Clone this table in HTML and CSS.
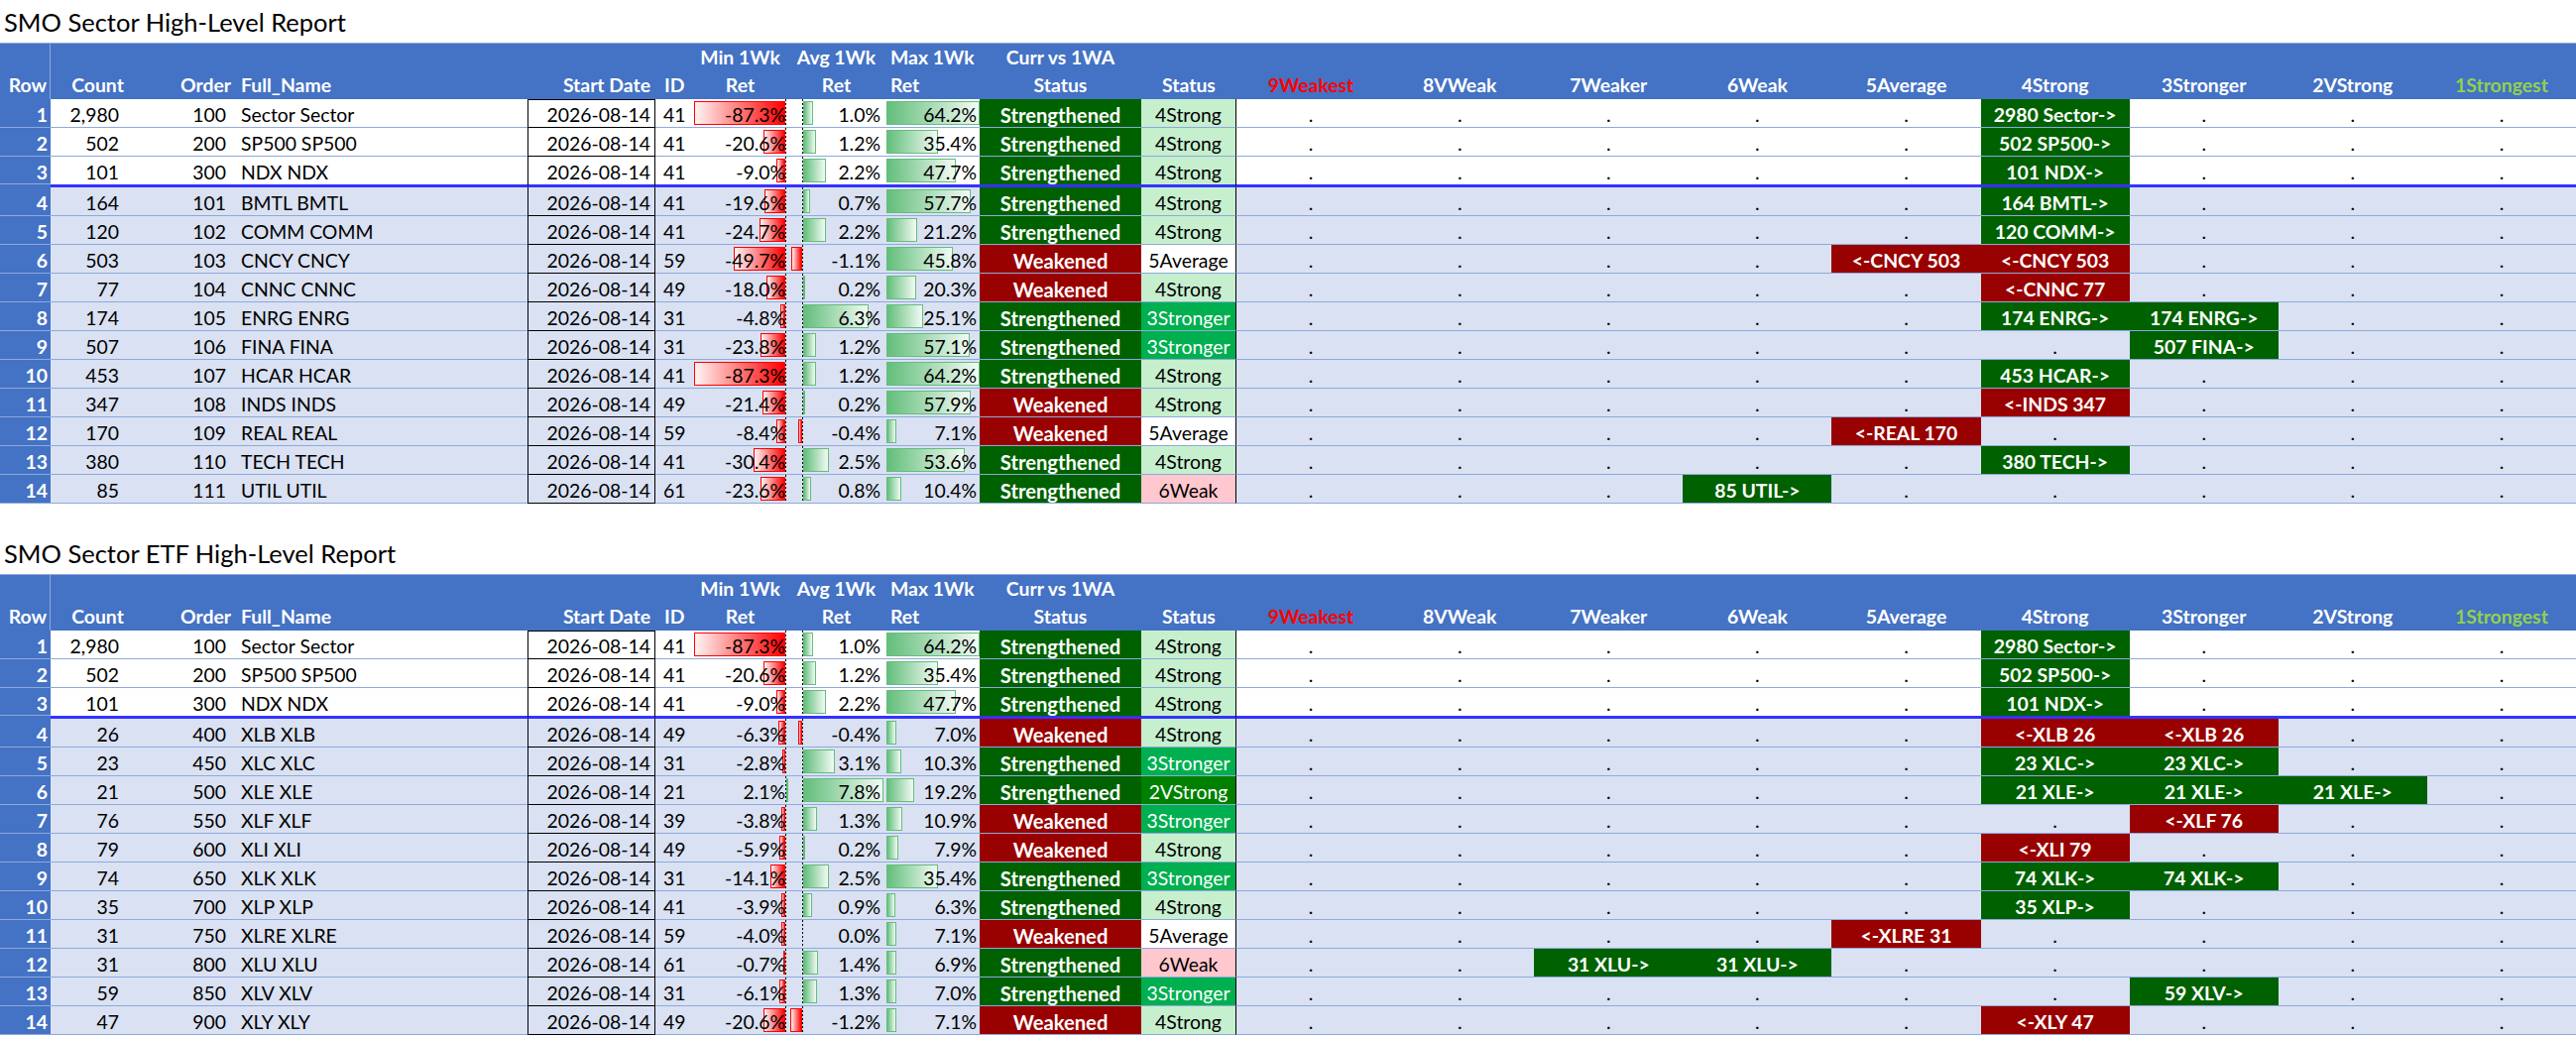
FILE: index.html
```html
<!DOCTYPE html>
<html>
<head>
<meta charset="utf-8">
<title>SMO Sector High-Level Report</title>
<link rel="stylesheet" href="styles.css">
</head>
<body>
<div class="sheet">
<section class="sec">
<div class="ttl">SMO Sector High-Level Report</div>
<div class="grid hd">
<div class="h hrn">Row</div><div class="h hc">Count</div><div class="h hr hord">Order</div><div class="h hl hnm">Full_Name</div><div class="h hr hdt">Start Date</div><div class="h hl hid">ID</div>
<div class="h hc">Min 1Wk<br>Ret</div><div class="h hc">Avg 1Wk<br>Ret</div><div class="h hl hmx">Max 1Wk<br>Ret</div><div class="h hc">Curr vs 1WA<br>Status</div><div class="h hc">Status</div>
<div class="h hc red">9Weakest</div><div class="h hc">8VWeak</div><div class="h hc">7Weaker</div><div class="h hc">6Weak</div><div class="h hc">5Average</div><div class="h hc">4Strong</div><div class="h hc">3Stronger</div><div class="h hc">2VStrong</div><div class="h hc lgr">1Strongest</div>
</div>

<div class="grid r w r1">
<div class="c rn">1</div><div class="c cnt">2,980</div><div class="c ord">100</div><div class="c nm">Sector Sector</div><div class="c dt">2026-08-14</div><div class="c id">41</div>
<div class="c mn"><b class="bn"><i class="rd" style="width:92px"></i></b><b class="ax"></b><b class="bp"></b><span class="v">-87.3%</span></div>
<div class="c av"><b class="bn"></b><b class="ax"></b><b class="bp"><i class="gr" style="width:10.4px"></i></b><span class="v">1.0%</span></div>
<div class="c mx"><b class="bp"><i class="gr" style="width:94px"></i></b><span class="v">64.2%</span></div>
<div class="c cs sg">Strengthened</div><div class="c st s4">4Strong</div>
<div class="c d">.</div><div class="c d">.</div><div class="c d">.</div><div class="c d">.</div><div class="c d">.</div><div class="c d gk">2980 Sector-&gt;</div><div class="c d">.</div><div class="c d">.</div><div class="c d">.</div>
</div>

<div class="grid r w">
<div class="c rn">2</div><div class="c cnt">502</div><div class="c ord">200</div><div class="c nm">SP500 SP500</div><div class="c dt">2026-08-14</div><div class="c id">41</div>
<div class="c mn"><b class="bn"><i class="rd" style="width:21.7px"></i></b><b class="ax"></b><b class="bp"></b><span class="v">-20.6%</span></div>
<div class="c av"><b class="bn"></b><b class="ax"></b><b class="bp"><i class="gr" style="width:12.5px"></i></b><span class="v">1.2%</span></div>
<div class="c mx"><b class="bp"><i class="gr" style="width:51.8px"></i></b><span class="v">35.4%</span></div>
<div class="c cs sg">Strengthened</div><div class="c st s4">4Strong</div>
<div class="c d">.</div><div class="c d">.</div><div class="c d">.</div><div class="c d">.</div><div class="c d">.</div><div class="c d gk">502 SP500-&gt;</div><div class="c d">.</div><div class="c d">.</div><div class="c d">.</div>
</div>

<div class="grid r w sep">
<div class="c rn">3</div><div class="c cnt">101</div><div class="c ord">300</div><div class="c nm">NDX NDX</div><div class="c dt">2026-08-14</div><div class="c id">41</div>
<div class="c mn"><b class="bn"><i class="rd" style="width:9.5px"></i></b><b class="ax"></b><b class="bp"></b><span class="v">-9.0%</span></div>
<div class="c av"><b class="bn"></b><b class="ax"></b><b class="bp"><i class="gr" style="width:22.9px"></i></b><span class="v">2.2%</span></div>
<div class="c mx"><b class="bp"><i class="gr" style="width:69.8px"></i></b><span class="v">47.7%</span></div>
<div class="c cs sg">Strengthened</div><div class="c st s4">4Strong</div>
<div class="c d">.</div><div class="c d">.</div><div class="c d">.</div><div class="c d">.</div><div class="c d">.</div><div class="c d gk">101 NDX-&gt;</div><div class="c d">.</div><div class="c d">.</div><div class="c d">.</div>
</div>

<div class="grid r b">
<div class="c rn">4</div><div class="c cnt">164</div><div class="c ord">101</div><div class="c nm">BMTL BMTL</div><div class="c dt">2026-08-14</div><div class="c id">41</div>
<div class="c mn"><b class="bn"><i class="rd" style="width:20.7px"></i></b><b class="ax"></b><b class="bp"></b><span class="v">-19.6%</span></div>
<div class="c av"><b class="bn"></b><b class="ax"></b><b class="bp"><i class="gr" style="width:7.3px"></i></b><span class="v">0.7%</span></div>
<div class="c mx"><b class="bp"><i class="gr" style="width:84.5px"></i></b><span class="v">57.7%</span></div>
<div class="c cs sg">Strengthened</div><div class="c st s4">4Strong</div>
<div class="c d">.</div><div class="c d">.</div><div class="c d">.</div><div class="c d">.</div><div class="c d">.</div><div class="c d gk">164 BMTL-&gt;</div><div class="c d">.</div><div class="c d">.</div><div class="c d">.</div>
</div>

<div class="grid r b">
<div class="c rn">5</div><div class="c cnt">120</div><div class="c ord">102</div><div class="c nm">COMM COMM</div><div class="c dt">2026-08-14</div><div class="c id">41</div>
<div class="c mn"><b class="bn"><i class="rd" style="width:26px"></i></b><b class="ax"></b><b class="bp"></b><span class="v">-24.7%</span></div>
<div class="c av"><b class="bn"></b><b class="ax"></b><b class="bp"><i class="gr" style="width:22.9px"></i></b><span class="v">2.2%</span></div>
<div class="c mx"><b class="bp"><i class="gr" style="width:31px"></i></b><span class="v">21.2%</span></div>
<div class="c cs sg">Strengthened</div><div class="c st s4">4Strong</div>
<div class="c d">.</div><div class="c d">.</div><div class="c d">.</div><div class="c d">.</div><div class="c d">.</div><div class="c d gk">120 COMM-&gt;</div><div class="c d">.</div><div class="c d">.</div><div class="c d">.</div>
</div>

<div class="grid r b">
<div class="c rn">6</div><div class="c cnt">503</div><div class="c ord">103</div><div class="c nm">CNCY CNCY</div><div class="c dt">2026-08-14</div><div class="c id">59</div>
<div class="c mn"><b class="bn"><i class="rd" style="width:52.4px"></i></b><b class="ax"></b><b class="bp"></b><span class="v">-49.7%</span></div>
<div class="c av"><b class="bn"><i class="rd" style="width:11px"></i></b><b class="ax"></b><b class="bp"></b><span class="v">-1.1%</span></div>
<div class="c mx"><b class="bp"><i class="gr" style="width:67px"></i></b><span class="v">45.8%</span></div>
<div class="c cs wk">Weakened</div><div class="c st s5">5Average</div>
<div class="c d">.</div><div class="c d">.</div><div class="c d">.</div><div class="c d">.</div><div class="c d rk">&lt;-CNCY 503</div><div class="c d rk">&lt;-CNCY 503</div><div class="c d">.</div><div class="c d">.</div><div class="c d">.</div>
</div>

<div class="grid r b">
<div class="c rn">7</div><div class="c cnt">77</div><div class="c ord">104</div><div class="c nm">CNNC CNNC</div><div class="c dt">2026-08-14</div><div class="c id">49</div>
<div class="c mn"><b class="bn"><i class="rd" style="width:19px"></i></b><b class="ax"></b><b class="bp"></b><span class="v">-18.0%</span></div>
<div class="c av"><b class="bn"></b><b class="ax"></b><b class="bp"><i class="gr" style="width:2.1px"></i></b><span class="v">0.2%</span></div>
<div class="c mx"><b class="bp"><i class="gr" style="width:29.7px"></i></b><span class="v">20.3%</span></div>
<div class="c cs wk">Weakened</div><div class="c st s4">4Strong</div>
<div class="c d">.</div><div class="c d">.</div><div class="c d">.</div><div class="c d">.</div><div class="c d">.</div><div class="c d rk">&lt;-CNNC 77</div><div class="c d">.</div><div class="c d">.</div><div class="c d">.</div>
</div>

<div class="grid r b">
<div class="c rn">8</div><div class="c cnt">174</div><div class="c ord">105</div><div class="c nm">ENRG ENRG</div><div class="c dt">2026-08-14</div><div class="c id">31</div>
<div class="c mn"><b class="bn"><i class="rd" style="width:5.1px"></i></b><b class="ax"></b><b class="bp"></b><span class="v">-4.8%</span></div>
<div class="c av"><b class="bn"></b><b class="ax"></b><b class="bp"><i class="gr" style="width:65.5px"></i></b><span class="v">6.3%</span></div>
<div class="c mx"><b class="bp"><i class="gr" style="width:36.7px"></i></b><span class="v">25.1%</span></div>
<div class="c cs sg">Strengthened</div><div class="c st s3">3Stronger</div>
<div class="c d">.</div><div class="c d">.</div><div class="c d">.</div><div class="c d">.</div><div class="c d">.</div><div class="c d gk">174 ENRG-&gt;</div><div class="c d gk">174 ENRG-&gt;</div><div class="c d">.</div><div class="c d">.</div>
</div>

<div class="grid r b">
<div class="c rn">9</div><div class="c cnt">507</div><div class="c ord">106</div><div class="c nm">FINA FINA</div><div class="c dt">2026-08-14</div><div class="c id">31</div>
<div class="c mn"><b class="bn"><i class="rd" style="width:25.1px"></i></b><b class="ax"></b><b class="bp"></b><span class="v">-23.8%</span></div>
<div class="c av"><b class="bn"></b><b class="ax"></b><b class="bp"><i class="gr" style="width:12.5px"></i></b><span class="v">1.2%</span></div>
<div class="c mx"><b class="bp"><i class="gr" style="width:83.6px"></i></b><span class="v">57.1%</span></div>
<div class="c cs sg">Strengthened</div><div class="c st s3">3Stronger</div>
<div class="c d">.</div><div class="c d">.</div><div class="c d">.</div><div class="c d">.</div><div class="c d">.</div><div class="c d">.</div><div class="c d gk">507 FINA-&gt;</div><div class="c d">.</div><div class="c d">.</div>
</div>

<div class="grid r b">
<div class="c rn">10</div><div class="c cnt">453</div><div class="c ord">107</div><div class="c nm">HCAR HCAR</div><div class="c dt">2026-08-14</div><div class="c id">41</div>
<div class="c mn"><b class="bn"><i class="rd" style="width:92px"></i></b><b class="ax"></b><b class="bp"></b><span class="v">-87.3%</span></div>
<div class="c av"><b class="bn"></b><b class="ax"></b><b class="bp"><i class="gr" style="width:12.5px"></i></b><span class="v">1.2%</span></div>
<div class="c mx"><b class="bp"><i class="gr" style="width:94px"></i></b><span class="v">64.2%</span></div>
<div class="c cs sg">Strengthened</div><div class="c st s4">4Strong</div>
<div class="c d">.</div><div class="c d">.</div><div class="c d">.</div><div class="c d">.</div><div class="c d">.</div><div class="c d gk">453 HCAR-&gt;</div><div class="c d">.</div><div class="c d">.</div><div class="c d">.</div>
</div>

<div class="grid r b">
<div class="c rn">11</div><div class="c cnt">347</div><div class="c ord">108</div><div class="c nm">INDS INDS</div><div class="c dt">2026-08-14</div><div class="c id">49</div>
<div class="c mn"><b class="bn"><i class="rd" style="width:22.6px"></i></b><b class="ax"></b><b class="bp"></b><span class="v">-21.4%</span></div>
<div class="c av"><b class="bn"></b><b class="ax"></b><b class="bp"><i class="gr" style="width:2.1px"></i></b><span class="v">0.2%</span></div>
<div class="c mx"><b class="bp"><i class="gr" style="width:84.8px"></i></b><span class="v">57.9%</span></div>
<div class="c cs wk">Weakened</div><div class="c st s4">4Strong</div>
<div class="c d">.</div><div class="c d">.</div><div class="c d">.</div><div class="c d">.</div><div class="c d">.</div><div class="c d rk">&lt;-INDS 347</div><div class="c d">.</div><div class="c d">.</div><div class="c d">.</div>
</div>

<div class="grid r b">
<div class="c rn">12</div><div class="c cnt">170</div><div class="c ord">109</div><div class="c nm">REAL REAL</div><div class="c dt">2026-08-14</div><div class="c id">59</div>
<div class="c mn"><b class="bn"><i class="rd" style="width:8.9px"></i></b><b class="ax"></b><b class="bp"></b><span class="v">-8.4%</span></div>
<div class="c av"><b class="bn"><i class="rd" style="width:4px"></i></b><b class="ax"></b><b class="bp"></b><span class="v">-0.4%</span></div>
<div class="c mx"><b class="bp"><i class="gr" style="width:10.4px"></i></b><span class="v">7.1%</span></div>
<div class="c cs wk">Weakened</div><div class="c st s5">5Average</div>
<div class="c d">.</div><div class="c d">.</div><div class="c d">.</div><div class="c d">.</div><div class="c d rk">&lt;-REAL 170</div><div class="c d">.</div><div class="c d">.</div><div class="c d">.</div><div class="c d">.</div>
</div>

<div class="grid r b">
<div class="c rn">13</div><div class="c cnt">380</div><div class="c ord">110</div><div class="c nm">TECH TECH</div><div class="c dt">2026-08-14</div><div class="c id">41</div>
<div class="c mn"><b class="bn"><i class="rd" style="width:32px"></i></b><b class="ax"></b><b class="bp"></b><span class="v">-30.4%</span></div>
<div class="c av"><b class="bn"></b><b class="ax"></b><b class="bp"><i class="gr" style="width:26px"></i></b><span class="v">2.5%</span></div>
<div class="c mx"><b class="bp"><i class="gr" style="width:78.5px"></i></b><span class="v">53.6%</span></div>
<div class="c cs sg">Strengthened</div><div class="c st s4">4Strong</div>
<div class="c d">.</div><div class="c d">.</div><div class="c d">.</div><div class="c d">.</div><div class="c d">.</div><div class="c d gk">380 TECH-&gt;</div><div class="c d">.</div><div class="c d">.</div><div class="c d">.</div>
</div>

<div class="grid r b">
<div class="c rn">14</div><div class="c cnt">85</div><div class="c ord">111</div><div class="c nm">UTIL UTIL</div><div class="c dt">2026-08-14</div><div class="c id">61</div>
<div class="c mn"><b class="bn"><i class="rd" style="width:24.9px"></i></b><b class="ax"></b><b class="bp"></b><span class="v">-23.6%</span></div>
<div class="c av"><b class="bn"></b><b class="ax"></b><b class="bp"><i class="gr" style="width:8.3px"></i></b><span class="v">0.8%</span></div>
<div class="c mx"><b class="bp"><i class="gr" style="width:15.2px"></i></b><span class="v">10.4%</span></div>
<div class="c cs sg">Strengthened</div><div class="c st s6">6Weak</div>
<div class="c d">.</div><div class="c d">.</div><div class="c d">.</div><div class="c d gk">85 UTIL-&gt;</div><div class="c d">.</div><div class="c d">.</div><div class="c d">.</div><div class="c d">.</div><div class="c d">.</div>
</div>
</section>

<section class="sec sec2">
<div class="ttl">SMO Sector ETF High-Level Report</div>
<div class="grid hd">
<div class="h hrn">Row</div><div class="h hc">Count</div><div class="h hr hord">Order</div><div class="h hl hnm">Full_Name</div><div class="h hr hdt">Start Date</div><div class="h hl hid">ID</div>
<div class="h hc">Min 1Wk<br>Ret</div><div class="h hc">Avg 1Wk<br>Ret</div><div class="h hl hmx">Max 1Wk<br>Ret</div><div class="h hc">Curr vs 1WA<br>Status</div><div class="h hc">Status</div>
<div class="h hc red">9Weakest</div><div class="h hc">8VWeak</div><div class="h hc">7Weaker</div><div class="h hc">6Weak</div><div class="h hc">5Average</div><div class="h hc">4Strong</div><div class="h hc">3Stronger</div><div class="h hc">2VStrong</div><div class="h hc lgr">1Strongest</div>
</div>

<div class="grid r w r1">
<div class="c rn">1</div><div class="c cnt">2,980</div><div class="c ord">100</div><div class="c nm">Sector Sector</div><div class="c dt">2026-08-14</div><div class="c id">41</div>
<div class="c mn"><b class="bn"><i class="rd" style="width:92px"></i></b><b class="ax"></b><b class="bp"></b><span class="v">-87.3%</span></div>
<div class="c av"><b class="bn"></b><b class="ax"></b><b class="bp"><i class="gr" style="width:10.4px"></i></b><span class="v">1.0%</span></div>
<div class="c mx"><b class="bp"><i class="gr" style="width:94px"></i></b><span class="v">64.2%</span></div>
<div class="c cs sg">Strengthened</div><div class="c st s4">4Strong</div>
<div class="c d">.</div><div class="c d">.</div><div class="c d">.</div><div class="c d">.</div><div class="c d">.</div><div class="c d gk">2980 Sector-&gt;</div><div class="c d">.</div><div class="c d">.</div><div class="c d">.</div>
</div>

<div class="grid r w">
<div class="c rn">2</div><div class="c cnt">502</div><div class="c ord">200</div><div class="c nm">SP500 SP500</div><div class="c dt">2026-08-14</div><div class="c id">41</div>
<div class="c mn"><b class="bn"><i class="rd" style="width:21.7px"></i></b><b class="ax"></b><b class="bp"></b><span class="v">-20.6%</span></div>
<div class="c av"><b class="bn"></b><b class="ax"></b><b class="bp"><i class="gr" style="width:12.5px"></i></b><span class="v">1.2%</span></div>
<div class="c mx"><b class="bp"><i class="gr" style="width:51.8px"></i></b><span class="v">35.4%</span></div>
<div class="c cs sg">Strengthened</div><div class="c st s4">4Strong</div>
<div class="c d">.</div><div class="c d">.</div><div class="c d">.</div><div class="c d">.</div><div class="c d">.</div><div class="c d gk">502 SP500-&gt;</div><div class="c d">.</div><div class="c d">.</div><div class="c d">.</div>
</div>

<div class="grid r w sep">
<div class="c rn">3</div><div class="c cnt">101</div><div class="c ord">300</div><div class="c nm">NDX NDX</div><div class="c dt">2026-08-14</div><div class="c id">41</div>
<div class="c mn"><b class="bn"><i class="rd" style="width:9.5px"></i></b><b class="ax"></b><b class="bp"></b><span class="v">-9.0%</span></div>
<div class="c av"><b class="bn"></b><b class="ax"></b><b class="bp"><i class="gr" style="width:22.9px"></i></b><span class="v">2.2%</span></div>
<div class="c mx"><b class="bp"><i class="gr" style="width:69.8px"></i></b><span class="v">47.7%</span></div>
<div class="c cs sg">Strengthened</div><div class="c st s4">4Strong</div>
<div class="c d">.</div><div class="c d">.</div><div class="c d">.</div><div class="c d">.</div><div class="c d">.</div><div class="c d gk">101 NDX-&gt;</div><div class="c d">.</div><div class="c d">.</div><div class="c d">.</div>
</div>

<div class="grid r b">
<div class="c rn">4</div><div class="c cnt">26</div><div class="c ord">400</div><div class="c nm">XLB XLB</div><div class="c dt">2026-08-14</div><div class="c id">49</div>
<div class="c mn"><b class="bn"><i class="rd" style="width:6.6px"></i></b><b class="ax"></b><b class="bp"></b><span class="v">-6.3%</span></div>
<div class="c av"><b class="bn"><i class="rd" style="width:4px"></i></b><b class="ax"></b><b class="bp"></b><span class="v">-0.4%</span></div>
<div class="c mx"><b class="bp"><i class="gr" style="width:10.2px"></i></b><span class="v">7.0%</span></div>
<div class="c cs wk">Weakened</div><div class="c st s4">4Strong</div>
<div class="c d">.</div><div class="c d">.</div><div class="c d">.</div><div class="c d">.</div><div class="c d">.</div><div class="c d rk">&lt;-XLB 26</div><div class="c d rk">&lt;-XLB 26</div><div class="c d">.</div><div class="c d">.</div>
</div>

<div class="grid r b">
<div class="c rn">5</div><div class="c cnt">23</div><div class="c ord">450</div><div class="c nm">XLC XLC</div><div class="c dt">2026-08-14</div><div class="c id">31</div>
<div class="c mn"><b class="bn"><i class="rd" style="width:3px"></i></b><b class="ax"></b><b class="bp"></b><span class="v">-2.8%</span></div>
<div class="c av"><b class="bn"></b><b class="ax"></b><b class="bp"><i class="gr" style="width:32.2px"></i></b><span class="v">3.1%</span></div>
<div class="c mx"><b class="bp"><i class="gr" style="width:15.1px"></i></b><span class="v">10.3%</span></div>
<div class="c cs sg">Strengthened</div><div class="c st s3">3Stronger</div>
<div class="c d">.</div><div class="c d">.</div><div class="c d">.</div><div class="c d">.</div><div class="c d">.</div><div class="c d gk">23 XLC-&gt;</div><div class="c d gk">23 XLC-&gt;</div><div class="c d">.</div><div class="c d">.</div>
</div>

<div class="grid r b">
<div class="c rn">6</div><div class="c cnt">21</div><div class="c ord">500</div><div class="c nm">XLE XLE</div><div class="c dt">2026-08-14</div><div class="c id">21</div>
<div class="c mn"><b class="bn"></b><b class="ax"></b><b class="bp"><i class="gr" style="width:2px"></i></b><span class="v">2.1%</span></div>
<div class="c av"><b class="bn"></b><b class="ax"></b><b class="bp"><i class="gr" style="width:81px"></i></b><span class="v">7.8%</span></div>
<div class="c mx"><b class="bp"><i class="gr" style="width:28.1px"></i></b><span class="v">19.2%</span></div>
<div class="c cs sg">Strengthened</div><div class="c st s2">2VStrong</div>
<div class="c d">.</div><div class="c d">.</div><div class="c d">.</div><div class="c d">.</div><div class="c d">.</div><div class="c d gk">21 XLE-&gt;</div><div class="c d gk">21 XLE-&gt;</div><div class="c d gk">21 XLE-&gt;</div><div class="c d">.</div>
</div>

<div class="grid r b">
<div class="c rn">7</div><div class="c cnt">76</div><div class="c ord">550</div><div class="c nm">XLF XLF</div><div class="c dt">2026-08-14</div><div class="c id">39</div>
<div class="c mn"><b class="bn"><i class="rd" style="width:4px"></i></b><b class="ax"></b><b class="bp"></b><span class="v">-3.8%</span></div>
<div class="c av"><b class="bn"></b><b class="ax"></b><b class="bp"><i class="gr" style="width:13.5px"></i></b><span class="v">1.3%</span></div>
<div class="c mx"><b class="bp"><i class="gr" style="width:16px"></i></b><span class="v">10.9%</span></div>
<div class="c cs wk">Weakened</div><div class="c st s3">3Stronger</div>
<div class="c d">.</div><div class="c d">.</div><div class="c d">.</div><div class="c d">.</div><div class="c d">.</div><div class="c d">.</div><div class="c d rk">&lt;-XLF 76</div><div class="c d">.</div><div class="c d">.</div>
</div>

<div class="grid r b">
<div class="c rn">8</div><div class="c cnt">79</div><div class="c ord">600</div><div class="c nm">XLI XLI</div><div class="c dt">2026-08-14</div><div class="c id">49</div>
<div class="c mn"><b class="bn"><i class="rd" style="width:6.2px"></i></b><b class="ax"></b><b class="bp"></b><span class="v">-5.9%</span></div>
<div class="c av"><b class="bn"></b><b class="ax"></b><b class="bp"><i class="gr" style="width:2.1px"></i></b><span class="v">0.2%</span></div>
<div class="c mx"><b class="bp"><i class="gr" style="width:11.6px"></i></b><span class="v">7.9%</span></div>
<div class="c cs wk">Weakened</div><div class="c st s4">4Strong</div>
<div class="c d">.</div><div class="c d">.</div><div class="c d">.</div><div class="c d">.</div><div class="c d">.</div><div class="c d rk">&lt;-XLI 79</div><div class="c d">.</div><div class="c d">.</div><div class="c d">.</div>
</div>

<div class="grid r b">
<div class="c rn">9</div><div class="c cnt">74</div><div class="c ord">650</div><div class="c nm">XLK XLK</div><div class="c dt">2026-08-14</div><div class="c id">31</div>
<div class="c mn"><b class="bn"><i class="rd" style="width:14.9px"></i></b><b class="ax"></b><b class="bp"></b><span class="v">-14.1%</span></div>
<div class="c av"><b class="bn"></b><b class="ax"></b><b class="bp"><i class="gr" style="width:26px"></i></b><span class="v">2.5%</span></div>
<div class="c mx"><b class="bp"><i class="gr" style="width:51.8px"></i></b><span class="v">35.4%</span></div>
<div class="c cs sg">Strengthened</div><div class="c st s3">3Stronger</div>
<div class="c d">.</div><div class="c d">.</div><div class="c d">.</div><div class="c d">.</div><div class="c d">.</div><div class="c d gk">74 XLK-&gt;</div><div class="c d gk">74 XLK-&gt;</div><div class="c d">.</div><div class="c d">.</div>
</div>

<div class="grid r b">
<div class="c rn">10</div><div class="c cnt">35</div><div class="c ord">700</div><div class="c nm">XLP XLP</div><div class="c dt">2026-08-14</div><div class="c id">41</div>
<div class="c mn"><b class="bn"><i class="rd" style="width:4.1px"></i></b><b class="ax"></b><b class="bp"></b><span class="v">-3.9%</span></div>
<div class="c av"><b class="bn"></b><b class="ax"></b><b class="bp"><i class="gr" style="width:9.4px"></i></b><span class="v">0.9%</span></div>
<div class="c mx"><b class="bp"><i class="gr" style="width:9.2px"></i></b><span class="v">6.3%</span></div>
<div class="c cs sg">Strengthened</div><div class="c st s4">4Strong</div>
<div class="c d">.</div><div class="c d">.</div><div class="c d">.</div><div class="c d">.</div><div class="c d">.</div><div class="c d gk">35 XLP-&gt;</div><div class="c d">.</div><div class="c d">.</div><div class="c d">.</div>
</div>

<div class="grid r b">
<div class="c rn">11</div><div class="c cnt">31</div><div class="c ord">750</div><div class="c nm">XLRE XLRE</div><div class="c dt">2026-08-14</div><div class="c id">59</div>
<div class="c mn"><b class="bn"><i class="rd" style="width:4.2px"></i></b><b class="ax"></b><b class="bp"></b><span class="v">-4.0%</span></div>
<div class="c av"><b class="bn"></b><b class="ax"></b><b class="bp"></b><span class="v">0.0%</span></div>
<div class="c mx"><b class="bp"><i class="gr" style="width:10.4px"></i></b><span class="v">7.1%</span></div>
<div class="c cs wk">Weakened</div><div class="c st s5">5Average</div>
<div class="c d">.</div><div class="c d">.</div><div class="c d">.</div><div class="c d">.</div><div class="c d rk">&lt;-XLRE 31</div><div class="c d">.</div><div class="c d">.</div><div class="c d">.</div><div class="c d">.</div>
</div>

<div class="grid r b">
<div class="c rn">12</div><div class="c cnt">31</div><div class="c ord">800</div><div class="c nm">XLU XLU</div><div class="c dt">2026-08-14</div><div class="c id">61</div>
<div class="c mn"><b class="bn"><i class="rd" style="width:2px"></i></b><b class="ax"></b><b class="bp"></b><span class="v">-0.7%</span></div>
<div class="c av"><b class="bn"></b><b class="ax"></b><b class="bp"><i class="gr" style="width:14.6px"></i></b><span class="v">1.4%</span></div>
<div class="c mx"><b class="bp"><i class="gr" style="width:10.1px"></i></b><span class="v">6.9%</span></div>
<div class="c cs sg">Strengthened</div><div class="c st s6">6Weak</div>
<div class="c d">.</div><div class="c d">.</div><div class="c d gk">31 XLU-&gt;</div><div class="c d gk">31 XLU-&gt;</div><div class="c d">.</div><div class="c d">.</div><div class="c d">.</div><div class="c d">.</div><div class="c d">.</div>
</div>

<div class="grid r b">
<div class="c rn">13</div><div class="c cnt">59</div><div class="c ord">850</div><div class="c nm">XLV XLV</div><div class="c dt">2026-08-14</div><div class="c id">31</div>
<div class="c mn"><b class="bn"><i class="rd" style="width:6.4px"></i></b><b class="ax"></b><b class="bp"></b><span class="v">-6.1%</span></div>
<div class="c av"><b class="bn"></b><b class="ax"></b><b class="bp"><i class="gr" style="width:13.5px"></i></b><span class="v">1.3%</span></div>
<div class="c mx"><b class="bp"><i class="gr" style="width:10.2px"></i></b><span class="v">7.0%</span></div>
<div class="c cs sg">Strengthened</div><div class="c st s3">3Stronger</div>
<div class="c d">.</div><div class="c d">.</div><div class="c d">.</div><div class="c d">.</div><div class="c d">.</div><div class="c d">.</div><div class="c d gk">59 XLV-&gt;</div><div class="c d">.</div><div class="c d">.</div>
</div>

<div class="grid r b">
<div class="c rn">14</div><div class="c cnt">47</div><div class="c ord">900</div><div class="c nm">XLY XLY</div><div class="c dt">2026-08-14</div><div class="c id">49</div>
<div class="c mn"><b class="bn"><i class="rd" style="width:21.7px"></i></b><b class="ax"></b><b class="bp"></b><span class="v">-20.6%</span></div>
<div class="c av"><b class="bn"><i class="rd" style="width:12px"></i></b><b class="ax"></b><b class="bp"></b><span class="v">-1.2%</span></div>
<div class="c mx"><b class="bp"><i class="gr" style="width:10.4px"></i></b><span class="v">7.1%</span></div>
<div class="c cs wk">Weakened</div><div class="c st s4">4Strong</div>
<div class="c d">.</div><div class="c d">.</div><div class="c d">.</div><div class="c d">.</div><div class="c d">.</div><div class="c d rk">&lt;-XLY 47</div><div class="c d">.</div><div class="c d">.</div><div class="c d">.</div>
</div>
</section>
</div>
</body>
</html>
```

FILE: styles.css
```css
* { box-sizing: border-box; }
html, body { margin: 0; padding: 0; background: #ffffff; }
body {
  font-family: Lato, "Open Sans", "Liberation Sans", sans-serif;
  font-size: 19.4px;
  color: #000000;
}
.sheet { width: 2598px; }
.sec2 { margin-top: 28px; }

.ttl {
  height: 43px;
  display: flex;
  align-items: flex-end;
  padding-left: 4px;
  font-size: 25.5px;
  line-height: 41px;
  white-space: nowrap;
}

.grid {
  display: grid;
  grid-template-columns: 51px 95px 90px 296px 129px 37px 97px 97px 96px 163px 96px repeat(9, 1fr);
}

/* header */
.hd {
  height: 57px;
  background: #4472C4;
  border-top: 1px solid #8EA9DB;
  color: #ffffff;
  font-weight: 700;
}
.h {
  display: flex;
  flex-direction: column;
  justify-content: flex-end;
  line-height: 28px;
  white-space: nowrap;
}
.hc { text-align: center; }
.hr { text-align: right; }
.hl { text-align: left; }
.hrn { text-align: right; padding-right: 3px; border-right: 1px solid #8EA9DB; }
.hord { padding-right: 3px; }
.hnm { padding-left: 7px; }
.hdt { padding-right: 5px; }
.hid { padding-left: 9px; }
.hmx { padding-left: 6px; }
.red { color: #FF0000; }
.lgr { color: #92D050; }

/* rows */
.r { height: 29px; }
.w { background: #ffffff; }
.b { background: #D9E1F2; }
.c {
  height: 29px;
  border-bottom: 1px solid #8EA9DB;
  display: flex;
  align-items: flex-end;
  line-height: 24px;
  white-space: nowrap;
}
.sep { height: 31px; }
.sep .c { height: 31px; border-bottom: 3px solid #3333FF; }
.sep .rn { border-bottom: 3px solid #4472C4; box-shadow: inset 0 -1px 0 #8EA9DB; }

.rn {
  background: #4472C4;
  color: #ffffff;
  font-weight: 700;
  justify-content: flex-end;
  padding-right: 3px;
}
.cnt { justify-content: flex-end; padding-right: 26px; }
.ord { justify-content: flex-end; padding-right: 8px; }
.nm { padding-left: 7px; }
.dt {
  justify-content: flex-end;
  padding-right: 4px;
  border-left: 1px solid #000000;
  border-right: 1px solid #000000;
  border-bottom: 1px solid #000000;
}
.r1 .dt { box-shadow: inset 0 1px 0 #000000; }
.id { padding-left: 8px; }

/* data bars: bars and value share one grid row */
.mn, .av, .mx {
  display: grid;
  grid-template-rows: 28px;
  align-items: stretch;
}
.mn { grid-template-columns: 94px 1px 2px; }
.av { grid-template-columns: 14px 1px 82px; }
.mx { grid-template-columns: 96px; }
.bn { grid-row: 1; grid-column: 1; display: flex; justify-content: flex-end; padding: 2px 0; }
.ax { grid-row: 1; grid-column: 2; background: repeating-linear-gradient(to bottom, #000000 0 2px, transparent 2px 4px); }
.bp { grid-row: 1; grid-column: 3; display: flex; justify-content: flex-start; padding: 2px 0; }
.mx .bp { grid-column: 1; padding-left: 2px; }
.bn i, .bp i { display: block; flex: none; }
.rd { background: linear-gradient(to right, #FFF4F4, #FF0000); border: 1px solid #FF0000; }
.gr { background: linear-gradient(to right, #63BE7B, #F2FAF4); border: 1px solid #63BE7B; }
.v {
  grid-row: 1;
  grid-column: 1 / -1;
  align-self: end;
  justify-self: end;
  line-height: 24px;
  padding-right: 3px;
}
.av .v { padding-right: 4px; }

/* status */
.cs { justify-content: center; color: #ffffff; font-weight: 700; font-size: 20.2px; }
.sg { background: #006100; }
.wk { background: #990000; }
.st { justify-content: center; border-right: 1px solid #000000; }
.s4 { background: #C6EFCE; }
.s3 { background: #00B050; color: #ffffff; }
.s2 { background: #008000; color: #ffffff; }
.s5 { background: #ffffff; }
.s6 { background: #FFC7CE; }

/* band cells */
.d { justify-content: center; }
.gk { background: #006100; color: #ffffff; font-weight: 700; }
.rk { background: #990000; color: #ffffff; font-weight: 700; }
```
